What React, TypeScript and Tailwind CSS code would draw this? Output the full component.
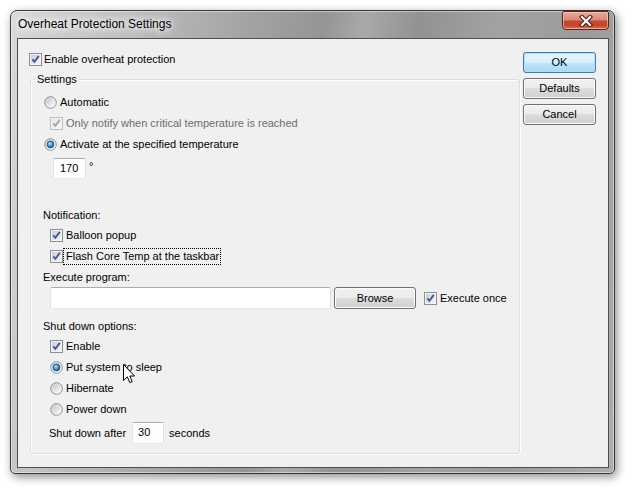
import React from "react";

function Defs() {
  return (
    <svg width="0" height="0" className="block">
      <defs>
        <linearGradient id="cbIn" x1="0" y1="0" x2="1" y2="1">
          <stop offset="0" stopColor="#c9ced6" />
          <stop offset="1" stopColor="#f7f7f7" />
        </linearGradient>
        <linearGradient id="cbInDis" x1="0" y1="0" x2="1" y2="1">
          <stop offset="0" stopColor="#e6e6e6" />
          <stop offset="1" stopColor="#f7f7f7" />
        </linearGradient>
        <linearGradient id="rdIn" x1="0.15" y1="0.1" x2="0.85" y2="0.9">
          <stop offset="0" stopColor="#c4c7cb" />
          <stop offset="1" stopColor="#fbfbfb" />
        </linearGradient>
        <radialGradient id="rdDot" cx="0.4" cy="0.35" r="0.75">
          <stop offset="0" stopColor="#b5ecff" />
          <stop offset="0.45" stopColor="#3c9ce6" />
          <stop offset="1" stopColor="#164f9c" />
        </radialGradient>
      </defs>
    </svg>
  );
}

function Check({ disabled = false }: { disabled?: boolean }) {
  return (
    <svg width="13" height="13" viewBox="0 0 13 13" className="shrink-0 block">
      <rect x="0.5" y="0.5" width="12" height="12" fill="#f4f4f4" stroke={disabled ? "#bcbcbc" : "#8e8f8f"} />
      <rect x="2" y="2" width="9" height="9" fill={disabled ? "url(#cbInDis)" : "url(#cbIn)"} />
      <path
        d="M3.3 6.4 L5.4 8.8 L9.8 2.9"
        fill="none"
        stroke={disabled ? "#a8a8a8" : "#4257a0"}
        strokeWidth="1.9"
        strokeLinejoin="miter"
      />
    </svg>
  );
}

function Radio({ on = false }: { on?: boolean }) {
  return (
    <svg width="13" height="13" viewBox="0 0 13 13" className="shrink-0 block">
      <circle cx="6.5" cy="6.5" r="5.8" fill="url(#rdIn)" stroke="#8e8f8f" strokeWidth="1" />
      <circle cx="6.5" cy="6.5" r="4.6" fill="none" stroke="#ffffff" strokeOpacity="0.35" strokeWidth="0.8" />
      {on && <circle cx="6.5" cy="6.5" r="3.4" fill="url(#rdDot)" stroke="#1b3f78" strokeWidth="0.8" />}
    </svg>
  );
}

function Btn({ children, primary = false, className = "" }: { children: React.ReactNode; primary?: boolean; className?: string }) {
  const base =
    "flex items-center justify-center rounded-[3px] border text-[11px] leading-[13px] text-black ";
  const style = primary
    ? "border-[#3c7fb1] bg-[linear-gradient(#eaf6fd_0%,#d9f0fc_50%,#bee6fd_50%,#a7d9f5_100%)] shadow-[inset_0_0_0_1px_#aee0f8]"
    : "border-[#707070] bg-[linear-gradient(#f2f2f2_0%,#ebebeb_50%,#dddddd_50%,#cfcfcf_100%)] shadow-[inset_0_0_0_1px_#fbfbfb]";
  return <div className={base + style + " " + className}>{children}</div>;
}

function Field({ className = "", children }: { className?: string; children?: React.ReactNode }) {
  return (
    <div
      className={
        "flex items-center rounded-[2px] border border-[#abadb3] border-l-[#e2e3ea] border-r-[#dbdfe6] border-b-[#e3e9ef] bg-white " +
        className
      }
    >
      {children}
    </div>
  );
}

function CloseBtn() {
  return (
    <div className="ml-auto mr-[5px] w-[47px] h-[19px] rounded-b-[4px] rounded-t-[2px] border border-[#5a2219] bg-[linear-gradient(#e9a99a_0%,#d88a78_45%,#c4482f_55%,#c6452b_80%,#d8755c_100%)] shadow-[inset_0_0_0_1px_rgba(255,220,210,0.55)] flex items-center justify-center">
      <svg width="14" height="12" viewBox="0 0 14 12">
        <path d="M3 2 L11 10 M11 2 L3 10" stroke="#4a1a12" strokeWidth="4.2" strokeLinecap="square" />
        <path d="M3 2 L11 10 M11 2 L3 10" stroke="#ffffff" strokeWidth="2.2" strokeLinecap="square" />
      </svg>
    </div>
  );
}

function Cursor() {
  return (
    <svg width="13" height="20" viewBox="0 0 13 20" className="absolute left-[123px] top-[364px]">
      <path
        d="M0.5 0.5 L0.5 16.5 L4.3 12.8 L6.8 18.6 L9.2 17.6 L6.8 12 L11.5 12 Z"
        fill="#ffffff"
        stroke="#000000"
        strokeWidth="1"
        strokeLinejoin="miter"
      />
    </svg>
  );
}

function Row({ children, className = "" }: { children: React.ReactNode; className?: string }) {
  return <div className={"h-[21px] flex items-center " + className}>{children}</div>;
}

export default function App() {
  return (
    <div className="relative w-[634px] h-[493px] overflow-hidden bg-white pt-[10px] pl-[10px] font-['Liberation_Sans',Arial,sans-serif] text-[11px] leading-[13px] text-black">
      <Defs />
      <div className="w-[605px] h-[464px] flex flex-col rounded-t-[7px] rounded-b-[5px] border border-[#363636] bg-[linear-gradient(100deg,#d9d9d9_0%,#bdbdbd_18%,#a2a2a2_36%,#959595_46%,#a9a9a9_52%,#929292_60%,#a3a3a3_72%,#9b9b9b_84%,#adadad_100%)] shadow-[2px_3px_10px_rgba(0,0,0,0.45),inset_0_0_0_1px_rgba(255,255,255,0.45)]">
        <div className="h-[27px] shrink-0 flex items-start">
          <div className="pl-[7px] pt-[6px] text-[12px] leading-[14px] [text-shadow:0_0_6px_#fff,0_0_10px_#fff,0_0_14px_#fff]">
            Overheat Protection Settings
          </div>
          <CloseBtn />
        </div>
        <div className="flex-1 ml-[6px] mr-[5px] mb-[5px] border border-[#4e4e4e] bg-[#f0f0f0] flex">
          {/* left column */}
          <div className="w-[502px] pl-[12px] pt-[14px] flex flex-col">
            <div className="h-[13px] flex items-center gap-[2px] -ml-[1px]">
              <Check />
              <span>Enable overheat protection</span>
            </div>
            <div className="relative mt-[13px] w-[490px] rounded-[3px] border border-[#d5dfe5] shadow-[inset_1px_1px_0_#ffffff,1px_1px_0_#ffffff] pl-[12px] pt-[12px] pb-[9px] flex flex-col">
              <span className="absolute left-[4px] -top-[7px] px-[2px] bg-[#f0f0f0] leading-[13px]">Settings</span>
              <Row className="ml-[1px] gap-[3px]">
                <Radio />
                <span>Automatic</span>
              </Row>
              <Row className="ml-[7px] gap-[3px]">
                <Check disabled />
                <span className="text-[#6d6d6d]">Only notify when critical temperature is reached</span>
              </Row>
              <Row className="ml-[1px] gap-[3px]">
                <Radio on />
                <span>Activate at the specified temperature</span>
              </Row>
              <div className="mt-[3px] h-[20px] flex items-center ml-[10px]">
                <Field className="w-[33px] h-[21px] pl-[6px]">
                  <span>170</span>
                </Field>
                <span className="ml-[3px] -mt-[4px]">°</span>
              </div>
              <div className="mt-[28px] h-[19px] flex items-center">Notification:</div>
              <Row className="ml-[7px] gap-[3px]">
                <Check />
                <span>Balloon popup</span>
              </Row>
              <Row className="ml-[7px] gap-[2px]">
                <Check />
                <span className="outline-1 outline-dotted outline-black outline-offset-[1px] pl-[1px]">Flash Core Temp at the taskbar</span>
              </Row>
              <div className="h-[20px] flex items-center">Execute program:</div>
              <div className="h-[22px] flex items-center ml-[7px]">
                <Field className="w-[281px] h-[22px]" />
                <Btn className="ml-[3px] w-[82px] h-[22px]">Browse</Btn>
                <div className="ml-[8px] flex items-center gap-[3px]">
                  <Check />
                  <span>Execute once</span>
                </div>
              </div>
              <div className="mt-[7px] h-[20px] flex items-center">Shut down options:</div>
              <Row className="ml-[7px] gap-[3px]">
                <Check />
                <span>Enable</span>
              </Row>
              <Row className="ml-[7px] gap-[3px]">
                <Radio on />
                <span>Put system to sleep</span>
              </Row>
              <Row className="ml-[7px] gap-[3px]">
                <Radio />
                <span>Hibernate</span>
              </Row>
              <Row className="ml-[7px] gap-[3px]">
                <Radio />
                <span>Power down</span>
              </Row>
              <div className="mt-[2px] h-[22px] flex items-center ml-[6px]">
                <span>Shut down after</span>
                <Field className="ml-[6px] w-[32px] h-[22px] pl-[5px] items-start pt-[3px]">
                  <span>30</span>
                </Field>
                <span className="ml-[5px]">seconds</span>
              </div>
            </div>
          </div>
          {/* right column */}
          <div className="ml-[3px] pt-[13px] w-[73px] flex flex-col gap-[5px]">
            <Btn primary className="h-[21px]">OK</Btn>
            <Btn className="h-[21px]">Defaults</Btn>
            <Btn className="h-[21px]">Cancel</Btn>
          </div>
        </div>
      </div>
      <Cursor />
    </div>
  );
}
